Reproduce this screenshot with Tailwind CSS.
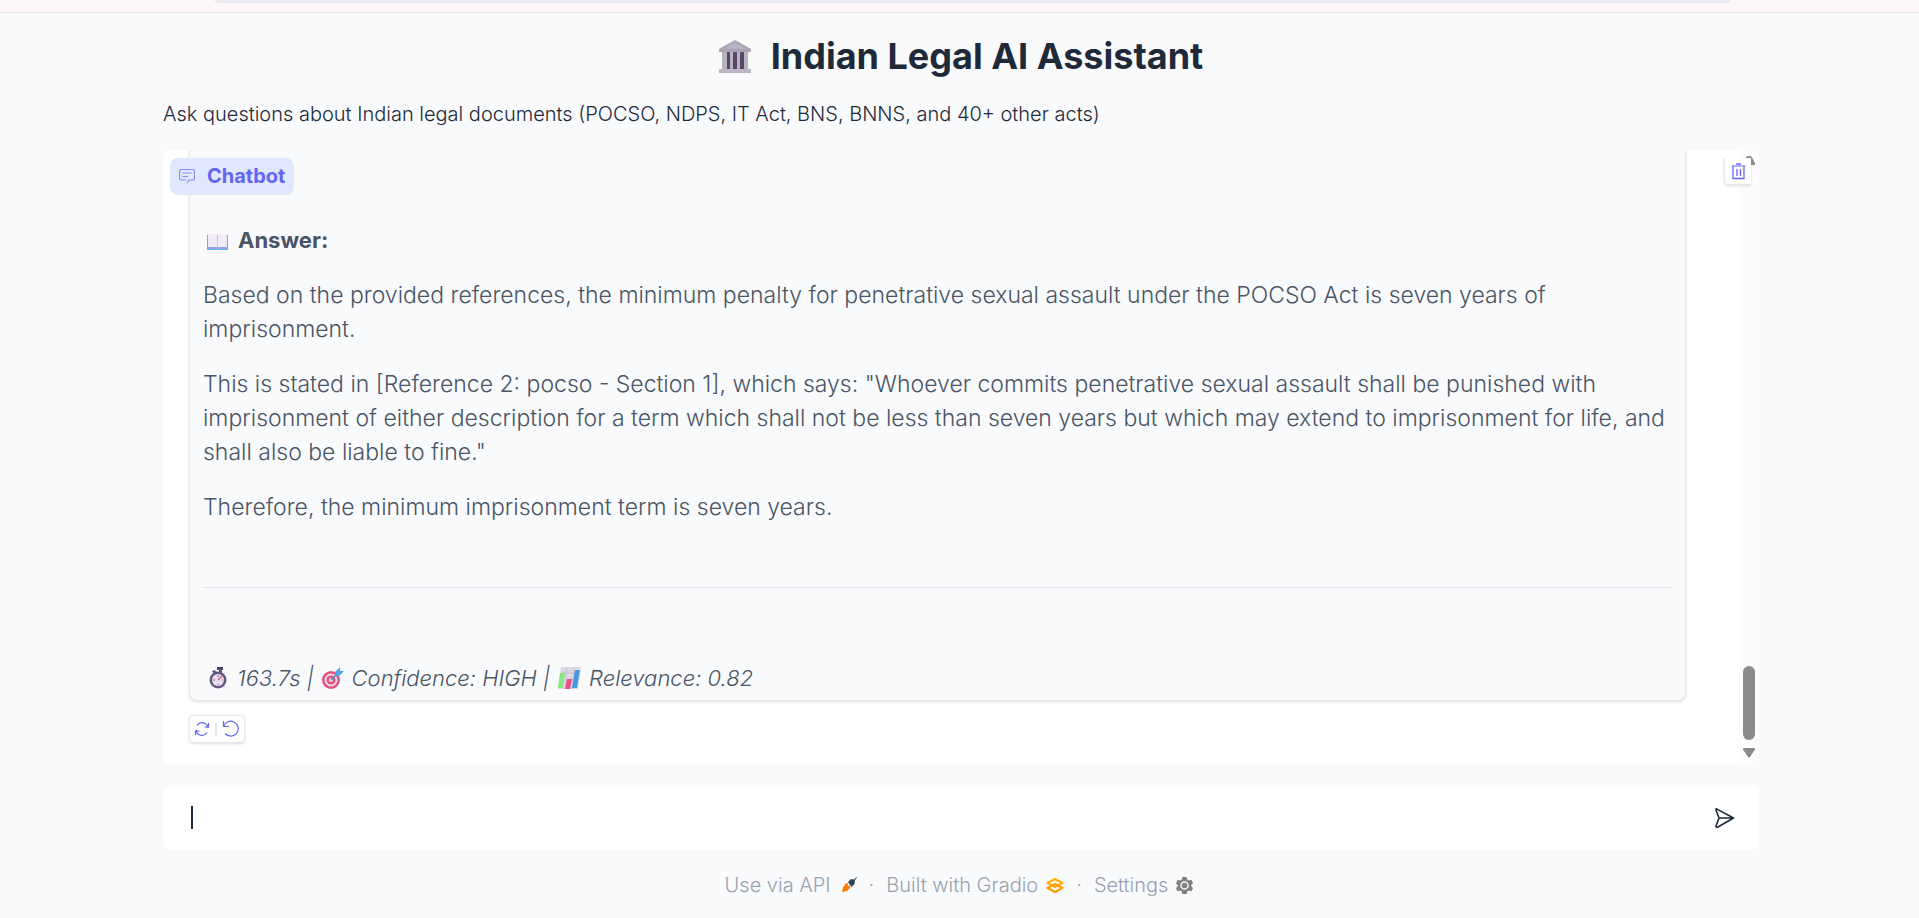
<!DOCTYPE html>
<html lang="en">
<head>
<meta charset="utf-8">
<meta name="viewport" content="width=device-width, initial-scale=1">
<title>Indian Legal AI Assistant</title>
<script src="https://cdn.jsdelivr.net/npm/@tailwindcss/browser@4"></script>
</head>
<body class="min-h-screen bg-[#f9fafc] font-['Inter',sans-serif] font-light text-gray-800">
<div class="h-[13px] border-b border-[#dfdfe1] bg-[#fdf7f9] pl-[215px] pr-[189px]">
  <div class="h-[3px] rounded-b-full bg-[#e9e8ee]"></div>
</div>

<main class="mx-auto flex w-10/12 max-w-[1599px] flex-col pl-[3px]">
  <h1 class="mt-[21px] flex items-center justify-center gap-5 text-4xl leading-[44px] font-bold">
    <svg class="h-[34px] w-8" viewBox="0 0 32 34" aria-hidden="true">
      <path d="M0 10 16 1l16 9v3H0z" fill="#aaa3b3"/><path d="M4 10 16 3l12 7z" fill="#b9b2c0"/>
      <path d="M3 13h26v17H3z" fill="#594769"/>
      <path d="M3 13h5v17H3zM11 13h3v17h-3zM18 13h3v17h-3zM25 13h4v17h-4z" fill="#b9b2c0"/>
      <path d="M0 30h32v4H0z" fill="#bcb5c4"/>
    </svg>
    Indian Legal AI Assistant
  </h1>
  <p class="mt-[22px] text-xl leading-7">Ask questions about Indian legal documents (POCSO, NDPS, IT Act, BNS, BNNS, and 40+ other acts)</p>

  <section aria-label="Chatbot" class="relative mt-[22px] overflow-hidden rounded-md bg-white pr-[73px] pb-5 pl-[26px]">
    <article class="rounded-b-lg border border-t-0 border-gray-200 bg-[#f9fafc] px-[13px] pt-[73px] pb-[5px] text-[23px] leading-[34px] text-gray-600 shadow">
      <h2 class="flex items-center gap-2.5 pl-1 text-[22px] font-bold">
        <svg class="mt-1 h-4 w-[21px]" viewBox="0 0 21 16" aria-hidden="true">
          <path d="M0 1h21v15H0z" fill="#62b3e8"/><path d="M1 13h19v2H1z" fill="#9a9fe0"/>
          <path d="M1 0h9l.5 1 .5-1h9v13H1z" fill="#f1eaf7"/><path d="M10 1h1v14h-1z" fill="#cdbfdd"/>
        </svg>
        Answer:
      </h2>
      <p class="mt-[21px]">Based on the provided references, the minimum penalty for penetrative sexual assault under the POCSO Act is seven years of<br>imprisonment.</p>
      <p class="mt-[21px]">This is stated in [Reference 2: pocso - Section 1], which says: "Whoever commits penetrative sexual assault shall be punished with<br>imprisonment of either description for a term which shall not be less than seven years but which may extend to imprisonment for life, and<br>shall also be liable to fine."</p>
      <p class="mt-[21px]">Therefore, the minimum imprisonment term is seven years.</p>
      <hr class="mt-[63px] mb-[73px] border-gray-200">
      <p class="flex items-center gap-2 pl-1.5 text-[22px] italic">
        <svg class="h-[22px] w-[20px]" viewBox="0 0 20 22" aria-hidden="true">
          <path d="M8 0h6v3H8z" fill="#4f4063"/><path d="M10 2h3v4h-3zM3 4l3-1 1 2-2 2z" fill="#63537a"/>
          <circle cx="9" cy="13" r="8.5" fill="#67577e"/><circle cx="9" cy="13" r="6" fill="#e9e1ee"/>
          <path d="m9 13 4-4" stroke="#e64b79" stroke-width="1.5"/><path d="M9 8v2M9 17v1M4 13h2M13 13h1" stroke="#776a86"/>
        </svg>
        163.7s |
        <svg class="h-[22px] w-[22px]" viewBox="0 0 22 22" aria-hidden="true">
          <circle cx="9" cy="13" r="9" fill="#e5517d"/><circle cx="9" cy="13" r="6.5" fill="#eadfe9"/>
          <circle cx="9" cy="13" r="4.5" fill="#e5517d"/><circle cx="9" cy="13" r="2" fill="#eadfe9"/>
          <path d="m9 13 8-8" stroke="#4587bf" stroke-width="1.5"/><path d="M13 5 18 0v4h4l-5 5h-4z" fill="#4ca5e6"/>
        </svg>
        Confidence: HIGH |
        <svg class="h-[22px] w-[23px]" viewBox="0 0 23 22" aria-hidden="true">
          <path d="M3 0h20l-3 22H0z" fill="#ded7e6"/><path d="M3 6h18M9 0 7 22M16 0l-2 22" stroke="#bcb3c7" stroke-width=".6"/>
          <path d="M2 6h5L5 21H0z" fill="#8ce482"/><path d="M9 12h5l-2 10H7z" fill="#e95082"/><path d="M17 3h5l-3 18h-5z" fill="#4299de"/>
        </svg>
        Relevance: 0.82
      </p>
    </article>

    <div class="mt-[14px] mb-px flex h-7 w-14 items-center justify-between rounded border border-gray-200 bg-white px-1 text-[#6366f1] shadow">
      <button type="button" aria-label="Retry">
        <svg class="size-4" viewBox="0 0 16 16" fill="none" stroke="currentColor" stroke-width="1.2"><path d="M14 7A6 6 0 0 0 3 4.500M14.500 2v4h-4M2 9a6 6 0 0 0 11 2.500M1.500 14v-4h4"/></svg>
      </button>
      <span class="h-[13px] w-0.5 bg-gray-200"></span>
      <button type="button" aria-label="Undo">
        <svg class="size-[18px]" viewBox="0 0 18 18" fill="none" stroke="currentColor" stroke-width="1.2"><path d="M1.500 1v5.500H7M1.500 6.500A7.500 7.500 0 1 1 3 13.500"/></svg>
      </button>
    </div>

    <div class="absolute top-2 left-[7px] flex h-[37px] items-center gap-3 rounded-lg border-b border-gray-200 bg-[#e0e7ff] px-[9px] text-xl font-bold text-[#6366f1]">
      <svg class="size-4 opacity-70" viewBox="0 0 16 16" fill="none" stroke="currentColor" stroke-width="1.2" aria-hidden="true"><path d="M8 15l2-3h3.500a2 2 0 0 0 2-2V3.500a2 2 0 0 0-2-2h-11a2 2 0 0 0-2 2V10a2 2 0 0 0 2 2H7M3.500 5h9M3.500 8.500H9"/></svg>
      Chatbot
    </div>
    <div class="absolute inset-y-0 right-0 w-5 bg-[#fcfcfc]" aria-hidden="true">
      <svg class="absolute top-1.5 left-1 h-[9px] w-3" viewBox="0 0 12 9" fill="#8b8b8b"><path d="M3.500.5Q6-.5 8.500.5L12 7Q12.500 9 11 9H1Q-.5 9 0 7z"/></svg>
      <div class="absolute bottom-6 left-1 h-[74px] w-3 rounded-full bg-[#8b8b8b]"></div>
      <svg class="absolute bottom-1.5 left-1 h-2.5 w-3" viewBox="0 0 12 10" fill="#8b8b8b"><path d="M1 0h10q1.500 0 1 1.500L7 9Q6 10.500 5 9L0 1.500Q-.5 0 1 0z"/></svg>
    </div>
    <button type="button" aria-label="Clear" class="absolute top-2 right-2 flex h-[27px] w-[27px] items-center justify-center rounded-bl border border-t-0 border-r-0 border-gray-200 bg-white text-[#6366f1] shadow">
      <svg class="h-[17px] w-[15px]" viewBox="0 0 15 17" fill="none" stroke="currentColor"><path d="M5 1h5M2 3.500v12h11v-12M6 6v7M9.500 6v7" stroke-width="1.300"/><path d="M.5 3h14" stroke-width="1.300" opacity=".7"/></svg>
    </button>
  </section>

  <form class="mt-[21px] flex h-[65px] items-center rounded-lg bg-white pr-6 pl-7">
    <span class="h-[23px] w-0.5 bg-gray-800" aria-hidden="true"></span>
    <input type="text" aria-label="Message" class="h-full min-w-0 flex-1 bg-transparent text-[22px] outline-none">
    <button type="button" aria-label="Send">
      <svg class="h-5 w-5" viewBox="0 0 20 20" fill="none" stroke="currentColor" stroke-width="1.600" stroke-linejoin="round"><path d="M1.500.9 18.500 10 2.500 19.200Q.9 19.500 1 18L4 10 1 2Q.8.8 1.500.9zM4 10h14"/></svg>
    </button>
  </form>

  <footer class="mt-[21px] flex items-center justify-center gap-3 pr-1 text-xl leading-7 text-gray-400">
    <a href="#" class="flex items-center gap-2.5">Use via API
      <svg class="size-4" viewBox="0 0 16 16" aria-hidden="true"><path d="m1 15 1-5 3-3 4 4-3 3z" fill="#ff7c00"/><path d="m7 5 3-3 3 .5L15.500 0l.5.5-2 2.500-.5 4-3 3z" fill="#374151"/><path d="M4 8 7 7M7 11l2-2" stroke="#ff7c00" stroke-width="2"/></svg></a>
    <span>·</span>
    <a href="#" class="flex items-center gap-2">Built with Gradio
      <svg class="h-[15px] w-[18px]" viewBox="0 0 18 15" fill="none" stroke="#ff9a00" stroke-width="2" stroke-linejoin="round" aria-hidden="true"><path d="m1.500 5 7.500-4 7.500 4L9 9z" stroke="#ffb000"/><path d="m1.500 10 7.500-4 7.500 4L9 14z"/></svg></a>
    <span>·</span>
    <a href="#" class="flex items-center gap-2">Settings
      <svg class="size-[17px]" viewBox="0 0 24 24" fill="#808080" aria-hidden="true"><path fill-rule="evenodd" d="M9 0h6l1 4 2 1 4-1 2 5-3 3 3 4-2 4-4-1-2 1-1 4H9l-1-4-2-1-4 1-2-4 3-4-3-3 2-5 4 1 2-1zM12 6a6 6 0 1 0 0 12 6 6 0 0 0 0-12z"/><circle cx="12" cy="12" r="4"/></svg></a>
  </footer>
</main>
</body>
</html>
